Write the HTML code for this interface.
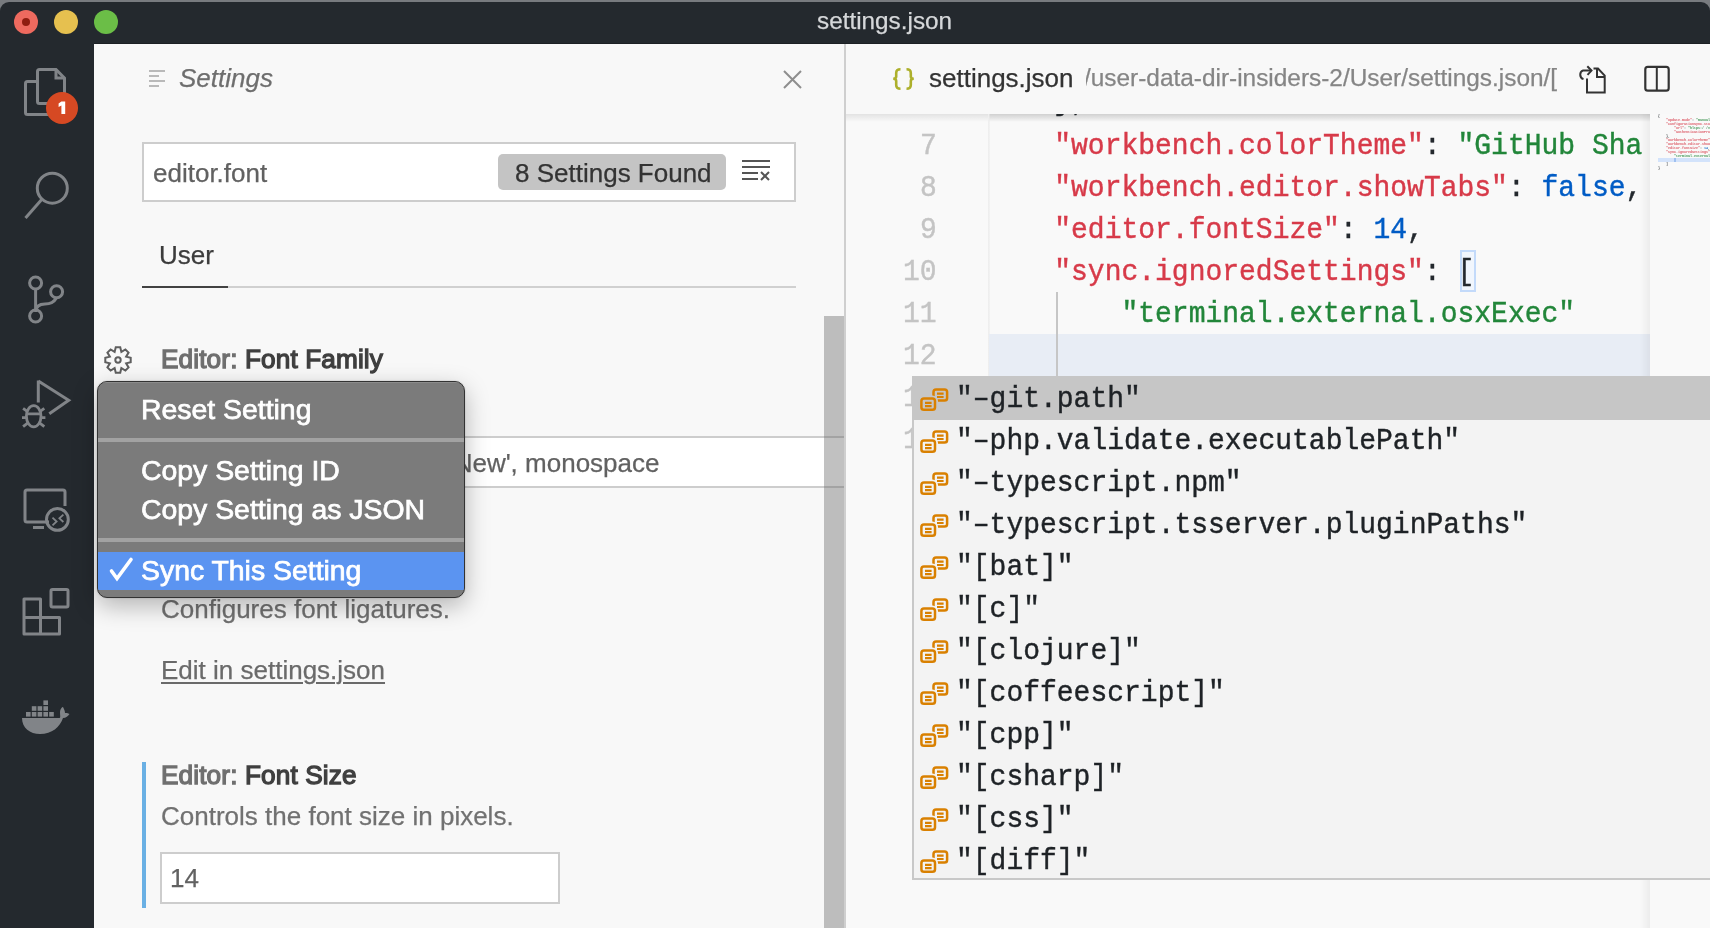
<!DOCTYPE html>
<html><head><meta charset="utf-8"><style>
html,body{margin:0;padding:0;width:1710px;height:928px;overflow:hidden;background:#f8f8f8}
.t{position:absolute;white-space:nowrap;line-height:1;will-change:transform}
.r{position:absolute}
</style></head><body>
<div class="r" style="left:0px;top:0px;width:1710px;height:44px;background:#787b7f;"></div>
<div class="r" style="left:0px;top:2px;width:1710px;height:42px;background:#24292e;border-top-left-radius:9px;border-top-right-radius:9px"></div>
<div class="r" style="left:94px;top:43px;width:1616px;height:1px;background:#1c2024;"></div>
<div class="r" style="left:14px;top:10px;width:24px;height:24px;border-radius:50%;background:#ee6a5f"></div>
<div class="r" style="left:22px;top:18px;width:8px;height:8px;border-radius:50%;background:#8f1d10"></div>
<div class="r" style="left:54px;top:10px;width:24px;height:24px;border-radius:50%;background:#e6c04f"></div>
<div class="r" style="left:94px;top:10px;width:24px;height:24px;border-radius:50%;background:#6bbe47"></div>
<div class="t" style="left:817px;top:9.43px;font-size:24.3px;color:#d6d8da;font-weight:400;font-style:normal;font-family:'Liberation Sans', sans-serif;-webkit-text-stroke:0.25px #d6d8da;">settings.json</div>
<div class="r" style="left:0px;top:44px;width:94px;height:884px;background:#24292e;"></div>
<svg class="r" style="left:0;top:44px" width="94" height="884" viewBox="0 44 94 884" fill="none" stroke="#818488" stroke-width="3">
<!-- explorer -->
<path d="M37.5 96 V71.5 a2 2 0 0 1 2-2 H56 l8.5 8.5 V96" />
<path d="M56 69.5 V78 H64.5" />
<path d="M37.5 81.5 H27.5 a2 2 0 0 0 -2 2 V112.5 a2 2 0 0 0 2 2 H48" />
<path d="M37.5 81.5 V101.5 a2 2 0 0 0 2 2 H48" />
<!-- search -->
<circle cx="52.3" cy="188.2" r="15" />
<path d="M41.7 199.5 L25.5 218" />
<!-- scm -->
<circle cx="35.6" cy="283" r="6" />
<circle cx="56.6" cy="291.7" r="6" />
<circle cx="35.6" cy="316" r="6" />
<path d="M35.6 289 V310" />
<path d="M56.6 297.7 Q53 304 45 304 Q36 304 35.6 312" />
<!-- debug -->
<path d="M38.3 380.5 V402.5 M38.3 381 L68.7 400.2 L49.3 413.8" />
<ellipse cx="33.7" cy="416.2" rx="7.3" ry="10.6" stroke-width="2.8"/>
<path d="M27 413.8 H40.4 M22 417.7 H26.2 M41.2 417.7 H45.4 M23.1 408.3 L27.6 411.6 M44.3 408.3 L39.8 411.6 M23.1 426.7 L27.9 422.8 M44.3 426.7 L39.5 422.8" stroke-width="2.8"/>
<!-- remote -->
<path d="M49 522 H27 a2 2 0 0 1 -2 -2 V492 a2 2 0 0 1 2 -2 H63 a2 2 0 0 1 2 2 V506" />
<path d="M33 527.5 H44" />
<circle cx="57.4" cy="519.4" r="10.9" />
<path d="M52.5 517.7 L56.6 521.5 L52.5 525.3 M63.4 514.7 L59.4 518.3 L63.4 522" stroke-width="1.8"/>
<!-- extensions -->
<path d="M24 599 H40.5 V617.5 H59.5 V634 H24 Z M24 617.5 H40.5 V634" stroke-linejoin="round"/>
<rect x="51" y="589.5" width="17" height="17.5" rx="1.5"/>
</svg>
<svg class="r" style="left:0;top:680px" width="94" height="70" viewBox="0 680 94 70" fill="#818488">
<rect x="26" y="712" width="4.6" height="4.6"/><rect x="31.8" y="712" width="4.6" height="4.6"/><rect x="37.6" y="712" width="4.6" height="4.6"/><rect x="43.4" y="712" width="4.6" height="4.6"/><rect x="49.2" y="712" width="4.6" height="4.6"/>
<rect x="31.8" y="706.2" width="4.6" height="4.6"/><rect x="37.6" y="706.2" width="4.6" height="4.6"/><rect x="43.4" y="706.2" width="4.6" height="4.6"/>
<rect x="43.4" y="700.4" width="4.6" height="4.6"/>
<path d="M22 718 H59 C61 718 60 716 60 712 C60 709 62 707 63 707 C64 709 65 711 65 713 C67 713 69 713.5 69.5 714 C68 716 66 718 63 718 C60 727 52 734 40 734 C30 734 22 728 22 718 Z"/>
</svg>
<div class="r" style="left:46px;top:92px;width:32px;height:32px;border-radius:50%;background:#d64923"></div>
<svg class="r" style="left:0;top:0" width="94" height="130" viewBox="0 0 94 130"><path d="M61.4 101.4 H65.2 V114.1 H61.4 V105.6 L58.6 107 V103.6 Z" fill="#fff"/></svg>
<div class="r" style="left:94px;top:44px;width:751px;height:884px;background:#f8f8f8;"></div>
<svg class="r" style="left:148px;top:68px" width="20" height="22" fill="#b9b9b9">
<rect x="1" y="2" width="16" height="2"/><rect x="1" y="7" width="10" height="2"/><rect x="1" y="12" width="16" height="2"/><rect x="1" y="17" width="10" height="2"/></svg>
<div class="t" style="left:179px;top:64.99px;font-size:26px;color:#6e6e6e;font-weight:400;font-style:italic;font-family:'Liberation Sans', sans-serif;-webkit-text-stroke:0.25px #6e6e6e;">Settings</div>
<svg class="r" style="left:782px;top:69px" width="21" height="21" stroke="#8e8e8e" stroke-width="2"><path d="M2 2 L19 19 M19 2 L2 19"/></svg>
<div class="r" style="left:142px;top:142px;width:654px;height:60px;background:#fff;box-sizing:border-box;border:2px solid #cdcdcd"></div>
<div class="t" style="left:153px;top:159.99px;font-size:26px;color:#616161;font-weight:400;font-style:normal;font-family:'Liberation Sans', sans-serif;-webkit-text-stroke:0.25px #616161;">editor.font</div>
<div class="r" style="left:498px;top:154px;width:228px;height:36px;background:#c4c4c4;border-radius:5px"></div>
<div class="t" style="left:515px;top:159.69px;font-size:26px;color:#333;font-weight:400;font-style:normal;font-family:'Liberation Sans', sans-serif;-webkit-text-stroke:0.25px #333;">8 Settings Found</div>
<svg class="r" style="left:740px;top:158px" width="32" height="24" stroke="#555" stroke-width="2" fill="none">
<path d="M2 3 H30 M2 9 H30 M2 15 H18 M2 21 H18 M21 14 L29 22 M29 14 L21 22"/></svg>
<div class="t" style="left:159px;top:241.99px;font-size:26px;color:#3c3c3c;font-weight:400;font-style:normal;font-family:'Liberation Sans', sans-serif;-webkit-text-stroke:0.25px #3c3c3c;">User</div>
<div class="r" style="left:142px;top:286px;width:654px;height:2px;background:#d0d0d0;"></div>
<div class="r" style="left:142px;top:285.5px;width:86px;height:2.5px;background:#424242;"></div>
<svg class="r" style="left:98px;top:340px" width="40" height="40" viewBox="0 0 40 40" fill="none" stroke="#5f5f5f" stroke-width="2" stroke-linejoin="miter">
<path d="M17.76 7.30 L22.24 7.30 L23.37 11.87 L27.40 9.43 L30.57 12.60 L28.13 16.63 L32.70 17.76 L32.70 22.24 L28.13 23.37 L30.57 27.40 L27.40 30.57 L23.37 28.13 L22.24 32.70 L17.76 32.70 L16.63 28.13 L12.60 30.57 L9.43 27.40 L11.87 23.37 L7.30 22.24 L7.30 17.76 L11.87 16.63 L9.43 12.60 L12.60 9.43 L16.63 11.87 Z"/>
<circle cx="20" cy="20" r="2.7"/></svg>
<div class="t" style="left:160.5px;top:346.32px;font-size:26.2px;color:#6f6f6f;font-weight:500;font-style:normal;font-family:'Liberation Sans', sans-serif;-webkit-text-stroke:1.3px #6f6f6f;letter-spacing:0.12px">Editor: <span style="color:#3f3f3f;-webkit-text-stroke:1.3px #3f3f3f">Font Family</span></div>
<div class="r" style="left:160px;top:436px;width:684px;height:52px;background:#fff;box-sizing:border-box;border-top:2px solid #cdcdcd;border-bottom:2px solid #cdcdcd;border-left:2px solid #cdcdcd"></div>
<div class="t" style="left:164px;top:449.59px;font-size:26px;color:#616161;font-weight:400;font-style:normal;font-family:'Liberation Sans', sans-serif;-webkit-text-stroke:0.25px #616161;">Menlo, Monaco, 'Courier New', monospace</div>
<div class="t" style="left:161px;top:595.59px;font-size:26px;color:#717171;font-weight:400;font-style:normal;font-family:'Liberation Sans', sans-serif;-webkit-text-stroke:0.25px #717171;">Configures font ligatures.</div>
<div class="t" style="left:161px;top:657.39px;font-size:26px;color:#6a6a6a;font-weight:400;font-style:normal;font-family:'Liberation Sans', sans-serif;-webkit-text-stroke:0.25px #6a6a6a;text-decoration:underline;text-decoration-thickness:2px;text-underline-offset:3px">Edit in settings.json</div>
<div class="r" style="left:142px;top:762px;width:4px;height:146px;background:#6ab0e4;"></div>
<div class="t" style="left:160.5px;top:761.62px;font-size:26.2px;color:#6f6f6f;font-weight:500;font-style:normal;font-family:'Liberation Sans', sans-serif;-webkit-text-stroke:1.3px #6f6f6f;letter-spacing:0.12px">Editor: <span style="color:#3f3f3f;-webkit-text-stroke:1.3px #3f3f3f">Font Size</span></div>
<div class="t" style="left:161px;top:803.49px;font-size:26px;color:#717171;font-weight:400;font-style:normal;font-family:'Liberation Sans', sans-serif;-webkit-text-stroke:0.25px #717171;">Controls the font size in pixels.</div>
<div class="r" style="left:160px;top:852px;width:400px;height:52px;background:#fff;box-sizing:border-box;border:2px solid #cdcdcd"></div>
<div class="t" style="left:170px;top:865.39px;font-size:26px;color:#616161;font-weight:400;font-style:normal;font-family:'Liberation Sans', sans-serif;-webkit-text-stroke:0.25px #616161;">14</div>
<div class="r" style="left:824px;top:316px;width:20px;height:612px;background:rgba(100,100,100,0.4);"></div>
<div class="r" style="left:844px;top:44px;width:2px;height:884px;background:#cfcfcf;"></div>
<div class="r" style="left:97px;top:381px;width:368px;height:217px;box-sizing:border-box;border-radius:10px;background:#7b7b7b;border:1px solid #333;box-shadow:0 8px 24px rgba(0,0,0,0.28), 0 0 2px rgba(0,0,0,0.2);overflow:hidden">
<div style="position:absolute;left:0;top:0;right:0;height:1px;background:#8c8c8c"></div>
<div style="position:absolute;left:0;top:56px;right:0;height:4px;background:#a2a2a2"></div>
<div style="position:absolute;left:0;top:156px;right:0;height:4px;background:#a2a2a2"></div>
<div style="position:absolute;left:0;top:170px;right:0;height:38px;background:#5b94f1"></div>
</div>
<div class="t" style="left:140.5px;top:395.25px;font-size:28.4px;color:#fff;font-weight:500;font-style:normal;font-family:'Liberation Sans', sans-serif;-webkit-text-stroke:0.75px #fff">Reset Setting</div>
<div class="t" style="left:140.5px;top:455.95px;font-size:28.4px;color:#fff;font-weight:500;font-style:normal;font-family:'Liberation Sans', sans-serif;-webkit-text-stroke:0.75px #fff">Copy Setting ID</div>
<div class="t" style="left:140.5px;top:494.75px;font-size:28.4px;color:#fff;font-weight:500;font-style:normal;font-family:'Liberation Sans', sans-serif;-webkit-text-stroke:0.75px #fff">Copy Setting as JSON</div>
<div class="t" style="left:140.5px;top:555.55px;font-size:28.4px;color:#fff;font-weight:500;font-style:normal;font-family:'Liberation Sans', sans-serif;-webkit-text-stroke:0.75px #fff">Sync This Setting</div>
<svg class="r" style="left:108px;top:556px" width="26" height="26" stroke="#fff" stroke-width="3.6" fill="none" stroke-linecap="round"><path d="M3.5 15 L9 22.5 L23 3.5"/></svg>
<div class="r" style="left:846px;top:44px;width:864px;height:884px;background:#f9f9f9;"></div>
<div class="r" style="left:846px;top:44px;width:864px;height:70px;background:#f8f8f8;"></div>
<div class="r" style="left:846px;top:114px;width:804px;height:8px;background:linear-gradient(rgba(0,0,0,0.09), rgba(0,0,0,0));"></div>
<svg class="r" style="left:885px;top:60px" width="40" height="40" viewBox="885 60 40 40" fill="none" stroke="#adb02c" stroke-width="2.6">
<path d="M900.5 69.3 Q896.2 69.3 896.2 73 V76.5 Q896.2 78.8 893.2 78.8 Q896.2 78.8 896.2 81 V85 Q896.2 88.8 900.5 88.8"/>
<path d="M906.5 69.3 Q910.8 69.3 910.8 73 V76.5 Q910.8 78.8 913.8 78.8 Q910.8 78.8 910.8 81 V85 Q910.8 88.8 906.5 88.8"/>
</svg>
<div class="t" style="left:929px;top:65.49px;font-size:26px;color:#333;font-weight:400;font-style:normal;font-family:'Liberation Sans', sans-serif;-webkit-text-stroke:0.25px #333;">settings.json</div>
<div class="r" style="left:1086px;top:50px;width:480px;height:60px;overflow:hidden"><div class="t" style="left:-2px;top:16.04px;font-size:24.4px;color:#858585;font-weight:400;font-style:normal;font-family:'Liberation Sans', sans-serif;-webkit-text-stroke:0.25px #858585;">/user-data-dir-insiders-2/User/settings.json/[</div>
</div>
<svg class="r" style="left:1570px;top:55px" width="110" height="50" viewBox="1570 55 110 50" fill="none" stroke="#333" stroke-width="2" stroke-linejoin="miter">
<path d="M1587 78.5 V92.6 H1604.7 V75.6 L1598 68.5 H1593.5"/>
<path d="M1597 68.5 V76.9 H1604.7"/>
<path d="M1583.5 79.1 A4.6 4.6 0 0 1 1583.2 70.4 H1591"/>
<path d="M1587.3 66.3 L1591.5 70.6 L1587.5 74.9"/>
<rect x="1645.3" y="66.9" width="23.4" height="23.8" rx="2.5" stroke-width="2.2"/>
<path d="M1656.8 67 V90.6"/>
</svg>
<div class="r" style="left:988px;top:114px;width:2px;height:766px;background:linear-gradient(90deg, #ededed, #f3f3f3);"></div>
<div class="r" style="left:989px;top:334px;width:661px;height:42px;background:#e8edf5;"></div>
<div class="r" style="left:1056px;top:292px;width:2px;height:84px;background:#c6c6c6;"></div>
<div class="r" style="left:1460px;top:250px;width:16px;height:42px;background:#f1f6fd;box-sizing:border-box;border:2px solid #c3dafa"></div>
<div class="r" style="left:987px;top:114px;width:658px;height:814px;overflow:hidden">
<div class="t" style="left:0px;top:-25.45px;font-size:28px;color:#333;font-weight:400;font-style:normal;font-family:'Liberation Mono', monospace;white-space:pre;-webkit-text-stroke:0.4px currentColor;transform:scaleY(1.07);transform-origin:0 21.45px"><span style="color:#24292e;-webkit-text-stroke:0.4px #24292e">    },</span></div>
<div class="t" style="left:0px;top:18.55px;font-size:28px;color:#333;font-weight:400;font-style:normal;font-family:'Liberation Mono', monospace;white-space:pre;-webkit-text-stroke:0.4px currentColor;transform:scaleY(1.07);transform-origin:0 21.45px"><span style="color:#24292e;-webkit-text-stroke:0.4px #24292e">    </span><span style="color:#d73a49;-webkit-text-stroke:0.4px #d73a49">"workbench.colorTheme"</span><span style="color:#24292e;-webkit-text-stroke:0.4px #24292e">: </span><span style="color:#22863a;-webkit-text-stroke:0.4px #22863a">"GitHub Sharp"</span><span style="color:#24292e;-webkit-text-stroke:0.4px #24292e">,</span></div>
<div class="t" style="left:0px;top:60.55px;font-size:28px;color:#333;font-weight:400;font-style:normal;font-family:'Liberation Mono', monospace;white-space:pre;-webkit-text-stroke:0.4px currentColor;transform:scaleY(1.07);transform-origin:0 21.45px"><span style="color:#24292e;-webkit-text-stroke:0.4px #24292e">    </span><span style="color:#d73a49;-webkit-text-stroke:0.4px #d73a49">"workbench.editor.showTabs"</span><span style="color:#24292e;-webkit-text-stroke:0.4px #24292e">: </span><span style="color:#005cc5;-webkit-text-stroke:0.4px #005cc5">false</span><span style="color:#24292e;-webkit-text-stroke:0.4px #24292e">,</span></div>
<div class="t" style="left:0px;top:102.55px;font-size:28px;color:#333;font-weight:400;font-style:normal;font-family:'Liberation Mono', monospace;white-space:pre;-webkit-text-stroke:0.4px currentColor;transform:scaleY(1.07);transform-origin:0 21.45px"><span style="color:#24292e;-webkit-text-stroke:0.4px #24292e">    </span><span style="color:#d73a49;-webkit-text-stroke:0.4px #d73a49">"editor.fontSize"</span><span style="color:#24292e;-webkit-text-stroke:0.4px #24292e">: </span><span style="color:#005cc5;-webkit-text-stroke:0.4px #005cc5">14</span><span style="color:#24292e;-webkit-text-stroke:0.4px #24292e">,</span></div>
<div class="t" style="left:0px;top:144.55px;font-size:28px;color:#333;font-weight:400;font-style:normal;font-family:'Liberation Mono', monospace;white-space:pre;-webkit-text-stroke:0.4px currentColor;transform:scaleY(1.07);transform-origin:0 21.45px"><span style="color:#24292e;-webkit-text-stroke:0.4px #24292e">    </span><span style="color:#d73a49;-webkit-text-stroke:0.4px #d73a49">"sync.ignoredSettings"</span><span style="color:#24292e;-webkit-text-stroke:0.4px #24292e">: </span><span style="color:#24292e;-webkit-text-stroke:0.4px #24292e">[</span></div>
<div class="t" style="left:0px;top:186.55px;font-size:28px;color:#333;font-weight:400;font-style:normal;font-family:'Liberation Mono', monospace;white-space:pre;-webkit-text-stroke:0.4px currentColor;transform:scaleY(1.07);transform-origin:0 21.45px"><span style="color:#24292e;-webkit-text-stroke:0.4px #24292e">        </span><span style="color:#22863a;-webkit-text-stroke:0.4px #22863a">"terminal.external.osxExec"</span></div>
<div class="t" style="left:0px;top:270.55px;font-size:28px;color:#333;font-weight:400;font-style:normal;font-family:'Liberation Mono', monospace;white-space:pre;-webkit-text-stroke:0.4px currentColor;transform:scaleY(1.07);transform-origin:0 21.45px"><span style="color:#24292e;-webkit-text-stroke:0.4px #24292e">    ]</span></div>
<div class="t" style="left:0px;top:312.55px;font-size:28px;color:#333;font-weight:400;font-style:normal;font-family:'Liberation Mono', monospace;white-space:pre;-webkit-text-stroke:0.4px currentColor;transform:scaleY(1.07);transform-origin:0 21.45px"><span style="color:#24292e;-webkit-text-stroke:0.4px #24292e">}</span></div>
</div>
<div class="r" style="left:989px;top:114px;width:661px;height:8px;background:linear-gradient(rgba(0,0,0,0.08), rgba(0,0,0,0));"></div>
<div class="t" style="left:920.2px;top:132.55px;font-size:28px;color:#c4c4c4;font-weight:400;font-style:normal;font-family:'Liberation Mono', monospace;-webkit-text-stroke:0.4px #c4c4c4;transform:scaleY(1.07);transform-origin:0 21.45px">7</div>
<div class="t" style="left:920.2px;top:174.55px;font-size:28px;color:#c4c4c4;font-weight:400;font-style:normal;font-family:'Liberation Mono', monospace;-webkit-text-stroke:0.4px #c4c4c4;transform:scaleY(1.07);transform-origin:0 21.45px">8</div>
<div class="t" style="left:920.2px;top:216.55px;font-size:28px;color:#c4c4c4;font-weight:400;font-style:normal;font-family:'Liberation Mono', monospace;-webkit-text-stroke:0.4px #c4c4c4;transform:scaleY(1.07);transform-origin:0 21.45px">9</div>
<div class="t" style="left:903.4px;top:258.55px;font-size:28px;color:#c4c4c4;font-weight:400;font-style:normal;font-family:'Liberation Mono', monospace;-webkit-text-stroke:0.4px #c4c4c4;transform:scaleY(1.07);transform-origin:0 21.45px">10</div>
<div class="t" style="left:903.4px;top:300.55px;font-size:28px;color:#c4c4c4;font-weight:400;font-style:normal;font-family:'Liberation Mono', monospace;-webkit-text-stroke:0.4px #c4c4c4;transform:scaleY(1.07);transform-origin:0 21.45px">11</div>
<div class="t" style="left:903.4px;top:342.55px;font-size:28px;color:#c4c4c4;font-weight:400;font-style:normal;font-family:'Liberation Mono', monospace;-webkit-text-stroke:0.4px #c4c4c4;transform:scaleY(1.07);transform-origin:0 21.45px">12</div>
<div class="t" style="left:903.4px;top:384.55px;font-size:28px;color:#c4c4c4;font-weight:400;font-style:normal;font-family:'Liberation Mono', monospace;-webkit-text-stroke:0.4px #c4c4c4;transform:scaleY(1.07);transform-origin:0 21.45px">13</div>
<div class="t" style="left:903.4px;top:426.55px;font-size:28px;color:#c4c4c4;font-weight:400;font-style:normal;font-family:'Liberation Mono', monospace;-webkit-text-stroke:0.4px #c4c4c4;transform:scaleY(1.07);transform-origin:0 21.45px">14</div>
<div class="r" style="left:1640px;top:114px;width:10px;height:814px;background:linear-gradient(90deg, rgba(0,0,0,0), rgba(0,0,0,0.05));"></div>
<div class="r" style="left:1658px;top:158px;width:52px;height:4px;background:#d3e3fb;"></div>
<div class="r" style="left:1674px;top:158px;width:2px;height:4px;background:#9fc0f0;"></div>
<div class="r" style="left:1658px;top:114px;font-family:'Liberation Mono', monospace;font-size:3.34px;line-height:4px;white-space:pre;font-weight:700;opacity:0.85"><span style="color:#24292e">{</span></div>
<div class="r" style="left:1658px;top:118px;font-family:'Liberation Mono', monospace;font-size:3.34px;line-height:4px;white-space:pre;font-weight:700;opacity:0.85"><span style="color:#24292e">    </span><span style="color:#d73a49">"update.mode"</span><span style="color:#24292e">: </span><span style="color:#22863a">"manual",</span></div>
<div class="r" style="left:1658px;top:122px;font-family:'Liberation Mono', monospace;font-size:3.34px;line-height:4px;white-space:pre;font-weight:700;opacity:0.85"><span style="color:#24292e">    </span><span style="color:#d73a49">"configurationSync.store": {</span></div>
<div class="r" style="left:1658px;top:126px;font-family:'Liberation Mono', monospace;font-size:3.34px;line-height:4px;white-space:pre;font-weight:700;opacity:0.85"><span style="color:#24292e">        </span><span style="color:#d73a49">"url"</span><span style="color:#24292e">: </span><span style="color:#22863a">"hltps:/ /vscode-sync</span></div>
<div class="r" style="left:1658px;top:130px;font-family:'Liberation Mono', monospace;font-size:3.34px;line-height:4px;white-space:pre;font-weight:700;opacity:0.85"><span style="color:#24292e">        </span><span style="color:#d73a49">"authenticationProviderId"</span></div>
<div class="r" style="left:1658px;top:134px;font-family:'Liberation Mono', monospace;font-size:3.34px;line-height:4px;white-space:pre;font-weight:700;opacity:0.85"><span style="color:#24292e">    },</span></div>
<div class="r" style="left:1658px;top:138px;font-family:'Liberation Mono', monospace;font-size:3.34px;line-height:4px;white-space:pre;font-weight:700;opacity:0.85"><span style="color:#24292e">    </span><span style="color:#d73a49">"workbench.colorTheme"</span><span style="color:#24292e">: </span><span style="color:#22863a">"GitHub</span></div>
<div class="r" style="left:1658px;top:142px;font-family:'Liberation Mono', monospace;font-size:3.34px;line-height:4px;white-space:pre;font-weight:700;opacity:0.85"><span style="color:#24292e">    </span><span style="color:#d73a49">"workbench.editor.showTabs"</span></div>
<div class="r" style="left:1658px;top:146px;font-family:'Liberation Mono', monospace;font-size:3.34px;line-height:4px;white-space:pre;font-weight:700;opacity:0.85"><span style="color:#24292e">    </span><span style="color:#d73a49">"editor.fontSize"</span><span style="color:#24292e">: </span><span style="color:#005cc5">14</span><span style="color:#24292e">,</span></div>
<div class="r" style="left:1658px;top:150px;font-family:'Liberation Mono', monospace;font-size:3.34px;line-height:4px;white-space:pre;font-weight:700;opacity:0.85"><span style="color:#24292e">    </span><span style="color:#d73a49">"sync.ignoredSettings"</span><span style="color:#24292e">: [</span></div>
<div class="r" style="left:1658px;top:154px;font-family:'Liberation Mono', monospace;font-size:3.34px;line-height:4px;white-space:pre;font-weight:700;opacity:0.85"><span style="color:#24292e">        </span><span style="color:#22863a">"terminal.external.osxExec"</span></div>
<div class="r" style="left:1658px;top:162px;font-family:'Liberation Mono', monospace;font-size:3.34px;line-height:4px;white-space:pre;font-weight:700;opacity:0.85"><span style="color:#24292e">    ]</span></div>
<div class="r" style="left:1658px;top:166px;font-family:'Liberation Mono', monospace;font-size:3.34px;line-height:4px;white-space:pre;font-weight:700;opacity:0.85"><span style="color:#24292e">}</span></div>
<div class="r" style="left:912px;top:376px;width:800px;height:504px;background:#f3f3f3;box-sizing:border-box;border:2px solid #c8c8c8"></div>
<div class="r" style="left:912px;top:376px;width:800px;height:44px;background:#c6c6c6;"></div>
<svg class="r" style="left:918px;top:386px" width="34" height="28" viewBox="0 0 34 28" fill="none" stroke="#d98000" stroke-width="2.5">
<rect x="15.5" y="3.4" width="13.6" height="11.2" rx="2.6"/>
<path d="M19 7.6 H25.6 M19 11 H25.6" stroke-width="2.2"/>
<rect x="3.4" y="12.4" width="13.6" height="11.4" rx="2.6" fill="#c6c6c6" stroke="#c6c6c6" stroke-width="6"/>
<rect x="3.4" y="12.4" width="13.6" height="11.4" rx="2.6"/>
<path d="M7 16.8 H13.6 M7 20.2 H13.6" stroke-width="2.2"/></svg>
<div class="t" style="left:956px;top:386.25px;font-size:28px;color:#1e2226;font-weight:400;font-style:normal;font-family:'Liberation Mono', monospace;white-space:pre;-webkit-text-stroke:0.4px #1e2226;transform:scaleY(1.07);transform-origin:0 21.45px">"–git.path"</div>
<svg class="r" style="left:918px;top:428px" width="34" height="28" viewBox="0 0 34 28" fill="none" stroke="#d98000" stroke-width="2.5">
<rect x="15.5" y="3.4" width="13.6" height="11.2" rx="2.6"/>
<path d="M19 7.6 H25.6 M19 11 H25.6" stroke-width="2.2"/>
<rect x="3.4" y="12.4" width="13.6" height="11.4" rx="2.6" fill="#f3f3f3" stroke="#f3f3f3" stroke-width="6"/>
<rect x="3.4" y="12.4" width="13.6" height="11.4" rx="2.6"/>
<path d="M7 16.8 H13.6 M7 20.2 H13.6" stroke-width="2.2"/></svg>
<div class="t" style="left:956px;top:428.25px;font-size:28px;color:#1e2226;font-weight:400;font-style:normal;font-family:'Liberation Mono', monospace;white-space:pre;-webkit-text-stroke:0.4px #1e2226;transform:scaleY(1.07);transform-origin:0 21.45px">"–php.validate.executablePath"</div>
<svg class="r" style="left:918px;top:470px" width="34" height="28" viewBox="0 0 34 28" fill="none" stroke="#d98000" stroke-width="2.5">
<rect x="15.5" y="3.4" width="13.6" height="11.2" rx="2.6"/>
<path d="M19 7.6 H25.6 M19 11 H25.6" stroke-width="2.2"/>
<rect x="3.4" y="12.4" width="13.6" height="11.4" rx="2.6" fill="#f3f3f3" stroke="#f3f3f3" stroke-width="6"/>
<rect x="3.4" y="12.4" width="13.6" height="11.4" rx="2.6"/>
<path d="M7 16.8 H13.6 M7 20.2 H13.6" stroke-width="2.2"/></svg>
<div class="t" style="left:956px;top:470.25px;font-size:28px;color:#1e2226;font-weight:400;font-style:normal;font-family:'Liberation Mono', monospace;white-space:pre;-webkit-text-stroke:0.4px #1e2226;transform:scaleY(1.07);transform-origin:0 21.45px">"–typescript.npm"</div>
<svg class="r" style="left:918px;top:512px" width="34" height="28" viewBox="0 0 34 28" fill="none" stroke="#d98000" stroke-width="2.5">
<rect x="15.5" y="3.4" width="13.6" height="11.2" rx="2.6"/>
<path d="M19 7.6 H25.6 M19 11 H25.6" stroke-width="2.2"/>
<rect x="3.4" y="12.4" width="13.6" height="11.4" rx="2.6" fill="#f3f3f3" stroke="#f3f3f3" stroke-width="6"/>
<rect x="3.4" y="12.4" width="13.6" height="11.4" rx="2.6"/>
<path d="M7 16.8 H13.6 M7 20.2 H13.6" stroke-width="2.2"/></svg>
<div class="t" style="left:956px;top:512.25px;font-size:28px;color:#1e2226;font-weight:400;font-style:normal;font-family:'Liberation Mono', monospace;white-space:pre;-webkit-text-stroke:0.4px #1e2226;transform:scaleY(1.07);transform-origin:0 21.45px">"–typescript.tsserver.pluginPaths"</div>
<svg class="r" style="left:918px;top:554px" width="34" height="28" viewBox="0 0 34 28" fill="none" stroke="#d98000" stroke-width="2.5">
<rect x="15.5" y="3.4" width="13.6" height="11.2" rx="2.6"/>
<path d="M19 7.6 H25.6 M19 11 H25.6" stroke-width="2.2"/>
<rect x="3.4" y="12.4" width="13.6" height="11.4" rx="2.6" fill="#f3f3f3" stroke="#f3f3f3" stroke-width="6"/>
<rect x="3.4" y="12.4" width="13.6" height="11.4" rx="2.6"/>
<path d="M7 16.8 H13.6 M7 20.2 H13.6" stroke-width="2.2"/></svg>
<div class="t" style="left:956px;top:554.25px;font-size:28px;color:#1e2226;font-weight:400;font-style:normal;font-family:'Liberation Mono', monospace;white-space:pre;-webkit-text-stroke:0.4px #1e2226;transform:scaleY(1.07);transform-origin:0 21.45px">"[bat]"</div>
<svg class="r" style="left:918px;top:596px" width="34" height="28" viewBox="0 0 34 28" fill="none" stroke="#d98000" stroke-width="2.5">
<rect x="15.5" y="3.4" width="13.6" height="11.2" rx="2.6"/>
<path d="M19 7.6 H25.6 M19 11 H25.6" stroke-width="2.2"/>
<rect x="3.4" y="12.4" width="13.6" height="11.4" rx="2.6" fill="#f3f3f3" stroke="#f3f3f3" stroke-width="6"/>
<rect x="3.4" y="12.4" width="13.6" height="11.4" rx="2.6"/>
<path d="M7 16.8 H13.6 M7 20.2 H13.6" stroke-width="2.2"/></svg>
<div class="t" style="left:956px;top:596.25px;font-size:28px;color:#1e2226;font-weight:400;font-style:normal;font-family:'Liberation Mono', monospace;white-space:pre;-webkit-text-stroke:0.4px #1e2226;transform:scaleY(1.07);transform-origin:0 21.45px">"[c]"</div>
<svg class="r" style="left:918px;top:638px" width="34" height="28" viewBox="0 0 34 28" fill="none" stroke="#d98000" stroke-width="2.5">
<rect x="15.5" y="3.4" width="13.6" height="11.2" rx="2.6"/>
<path d="M19 7.6 H25.6 M19 11 H25.6" stroke-width="2.2"/>
<rect x="3.4" y="12.4" width="13.6" height="11.4" rx="2.6" fill="#f3f3f3" stroke="#f3f3f3" stroke-width="6"/>
<rect x="3.4" y="12.4" width="13.6" height="11.4" rx="2.6"/>
<path d="M7 16.8 H13.6 M7 20.2 H13.6" stroke-width="2.2"/></svg>
<div class="t" style="left:956px;top:638.25px;font-size:28px;color:#1e2226;font-weight:400;font-style:normal;font-family:'Liberation Mono', monospace;white-space:pre;-webkit-text-stroke:0.4px #1e2226;transform:scaleY(1.07);transform-origin:0 21.45px">"[clojure]"</div>
<svg class="r" style="left:918px;top:680px" width="34" height="28" viewBox="0 0 34 28" fill="none" stroke="#d98000" stroke-width="2.5">
<rect x="15.5" y="3.4" width="13.6" height="11.2" rx="2.6"/>
<path d="M19 7.6 H25.6 M19 11 H25.6" stroke-width="2.2"/>
<rect x="3.4" y="12.4" width="13.6" height="11.4" rx="2.6" fill="#f3f3f3" stroke="#f3f3f3" stroke-width="6"/>
<rect x="3.4" y="12.4" width="13.6" height="11.4" rx="2.6"/>
<path d="M7 16.8 H13.6 M7 20.2 H13.6" stroke-width="2.2"/></svg>
<div class="t" style="left:956px;top:680.25px;font-size:28px;color:#1e2226;font-weight:400;font-style:normal;font-family:'Liberation Mono', monospace;white-space:pre;-webkit-text-stroke:0.4px #1e2226;transform:scaleY(1.07);transform-origin:0 21.45px">"[coffeescript]"</div>
<svg class="r" style="left:918px;top:722px" width="34" height="28" viewBox="0 0 34 28" fill="none" stroke="#d98000" stroke-width="2.5">
<rect x="15.5" y="3.4" width="13.6" height="11.2" rx="2.6"/>
<path d="M19 7.6 H25.6 M19 11 H25.6" stroke-width="2.2"/>
<rect x="3.4" y="12.4" width="13.6" height="11.4" rx="2.6" fill="#f3f3f3" stroke="#f3f3f3" stroke-width="6"/>
<rect x="3.4" y="12.4" width="13.6" height="11.4" rx="2.6"/>
<path d="M7 16.8 H13.6 M7 20.2 H13.6" stroke-width="2.2"/></svg>
<div class="t" style="left:956px;top:722.25px;font-size:28px;color:#1e2226;font-weight:400;font-style:normal;font-family:'Liberation Mono', monospace;white-space:pre;-webkit-text-stroke:0.4px #1e2226;transform:scaleY(1.07);transform-origin:0 21.45px">"[cpp]"</div>
<svg class="r" style="left:918px;top:764px" width="34" height="28" viewBox="0 0 34 28" fill="none" stroke="#d98000" stroke-width="2.5">
<rect x="15.5" y="3.4" width="13.6" height="11.2" rx="2.6"/>
<path d="M19 7.6 H25.6 M19 11 H25.6" stroke-width="2.2"/>
<rect x="3.4" y="12.4" width="13.6" height="11.4" rx="2.6" fill="#f3f3f3" stroke="#f3f3f3" stroke-width="6"/>
<rect x="3.4" y="12.4" width="13.6" height="11.4" rx="2.6"/>
<path d="M7 16.8 H13.6 M7 20.2 H13.6" stroke-width="2.2"/></svg>
<div class="t" style="left:956px;top:764.25px;font-size:28px;color:#1e2226;font-weight:400;font-style:normal;font-family:'Liberation Mono', monospace;white-space:pre;-webkit-text-stroke:0.4px #1e2226;transform:scaleY(1.07);transform-origin:0 21.45px">"[csharp]"</div>
<svg class="r" style="left:918px;top:806px" width="34" height="28" viewBox="0 0 34 28" fill="none" stroke="#d98000" stroke-width="2.5">
<rect x="15.5" y="3.4" width="13.6" height="11.2" rx="2.6"/>
<path d="M19 7.6 H25.6 M19 11 H25.6" stroke-width="2.2"/>
<rect x="3.4" y="12.4" width="13.6" height="11.4" rx="2.6" fill="#f3f3f3" stroke="#f3f3f3" stroke-width="6"/>
<rect x="3.4" y="12.4" width="13.6" height="11.4" rx="2.6"/>
<path d="M7 16.8 H13.6 M7 20.2 H13.6" stroke-width="2.2"/></svg>
<div class="t" style="left:956px;top:806.25px;font-size:28px;color:#1e2226;font-weight:400;font-style:normal;font-family:'Liberation Mono', monospace;white-space:pre;-webkit-text-stroke:0.4px #1e2226;transform:scaleY(1.07);transform-origin:0 21.45px">"[css]"</div>
<svg class="r" style="left:918px;top:848px" width="34" height="28" viewBox="0 0 34 28" fill="none" stroke="#d98000" stroke-width="2.5">
<rect x="15.5" y="3.4" width="13.6" height="11.2" rx="2.6"/>
<path d="M19 7.6 H25.6 M19 11 H25.6" stroke-width="2.2"/>
<rect x="3.4" y="12.4" width="13.6" height="11.4" rx="2.6" fill="#f3f3f3" stroke="#f3f3f3" stroke-width="6"/>
<rect x="3.4" y="12.4" width="13.6" height="11.4" rx="2.6"/>
<path d="M7 16.8 H13.6 M7 20.2 H13.6" stroke-width="2.2"/></svg>
<div class="t" style="left:956px;top:848.25px;font-size:28px;color:#1e2226;font-weight:400;font-style:normal;font-family:'Liberation Mono', monospace;white-space:pre;-webkit-text-stroke:0.4px #1e2226;transform:scaleY(1.07);transform-origin:0 21.45px">"[diff]"</div>
</body></html>
